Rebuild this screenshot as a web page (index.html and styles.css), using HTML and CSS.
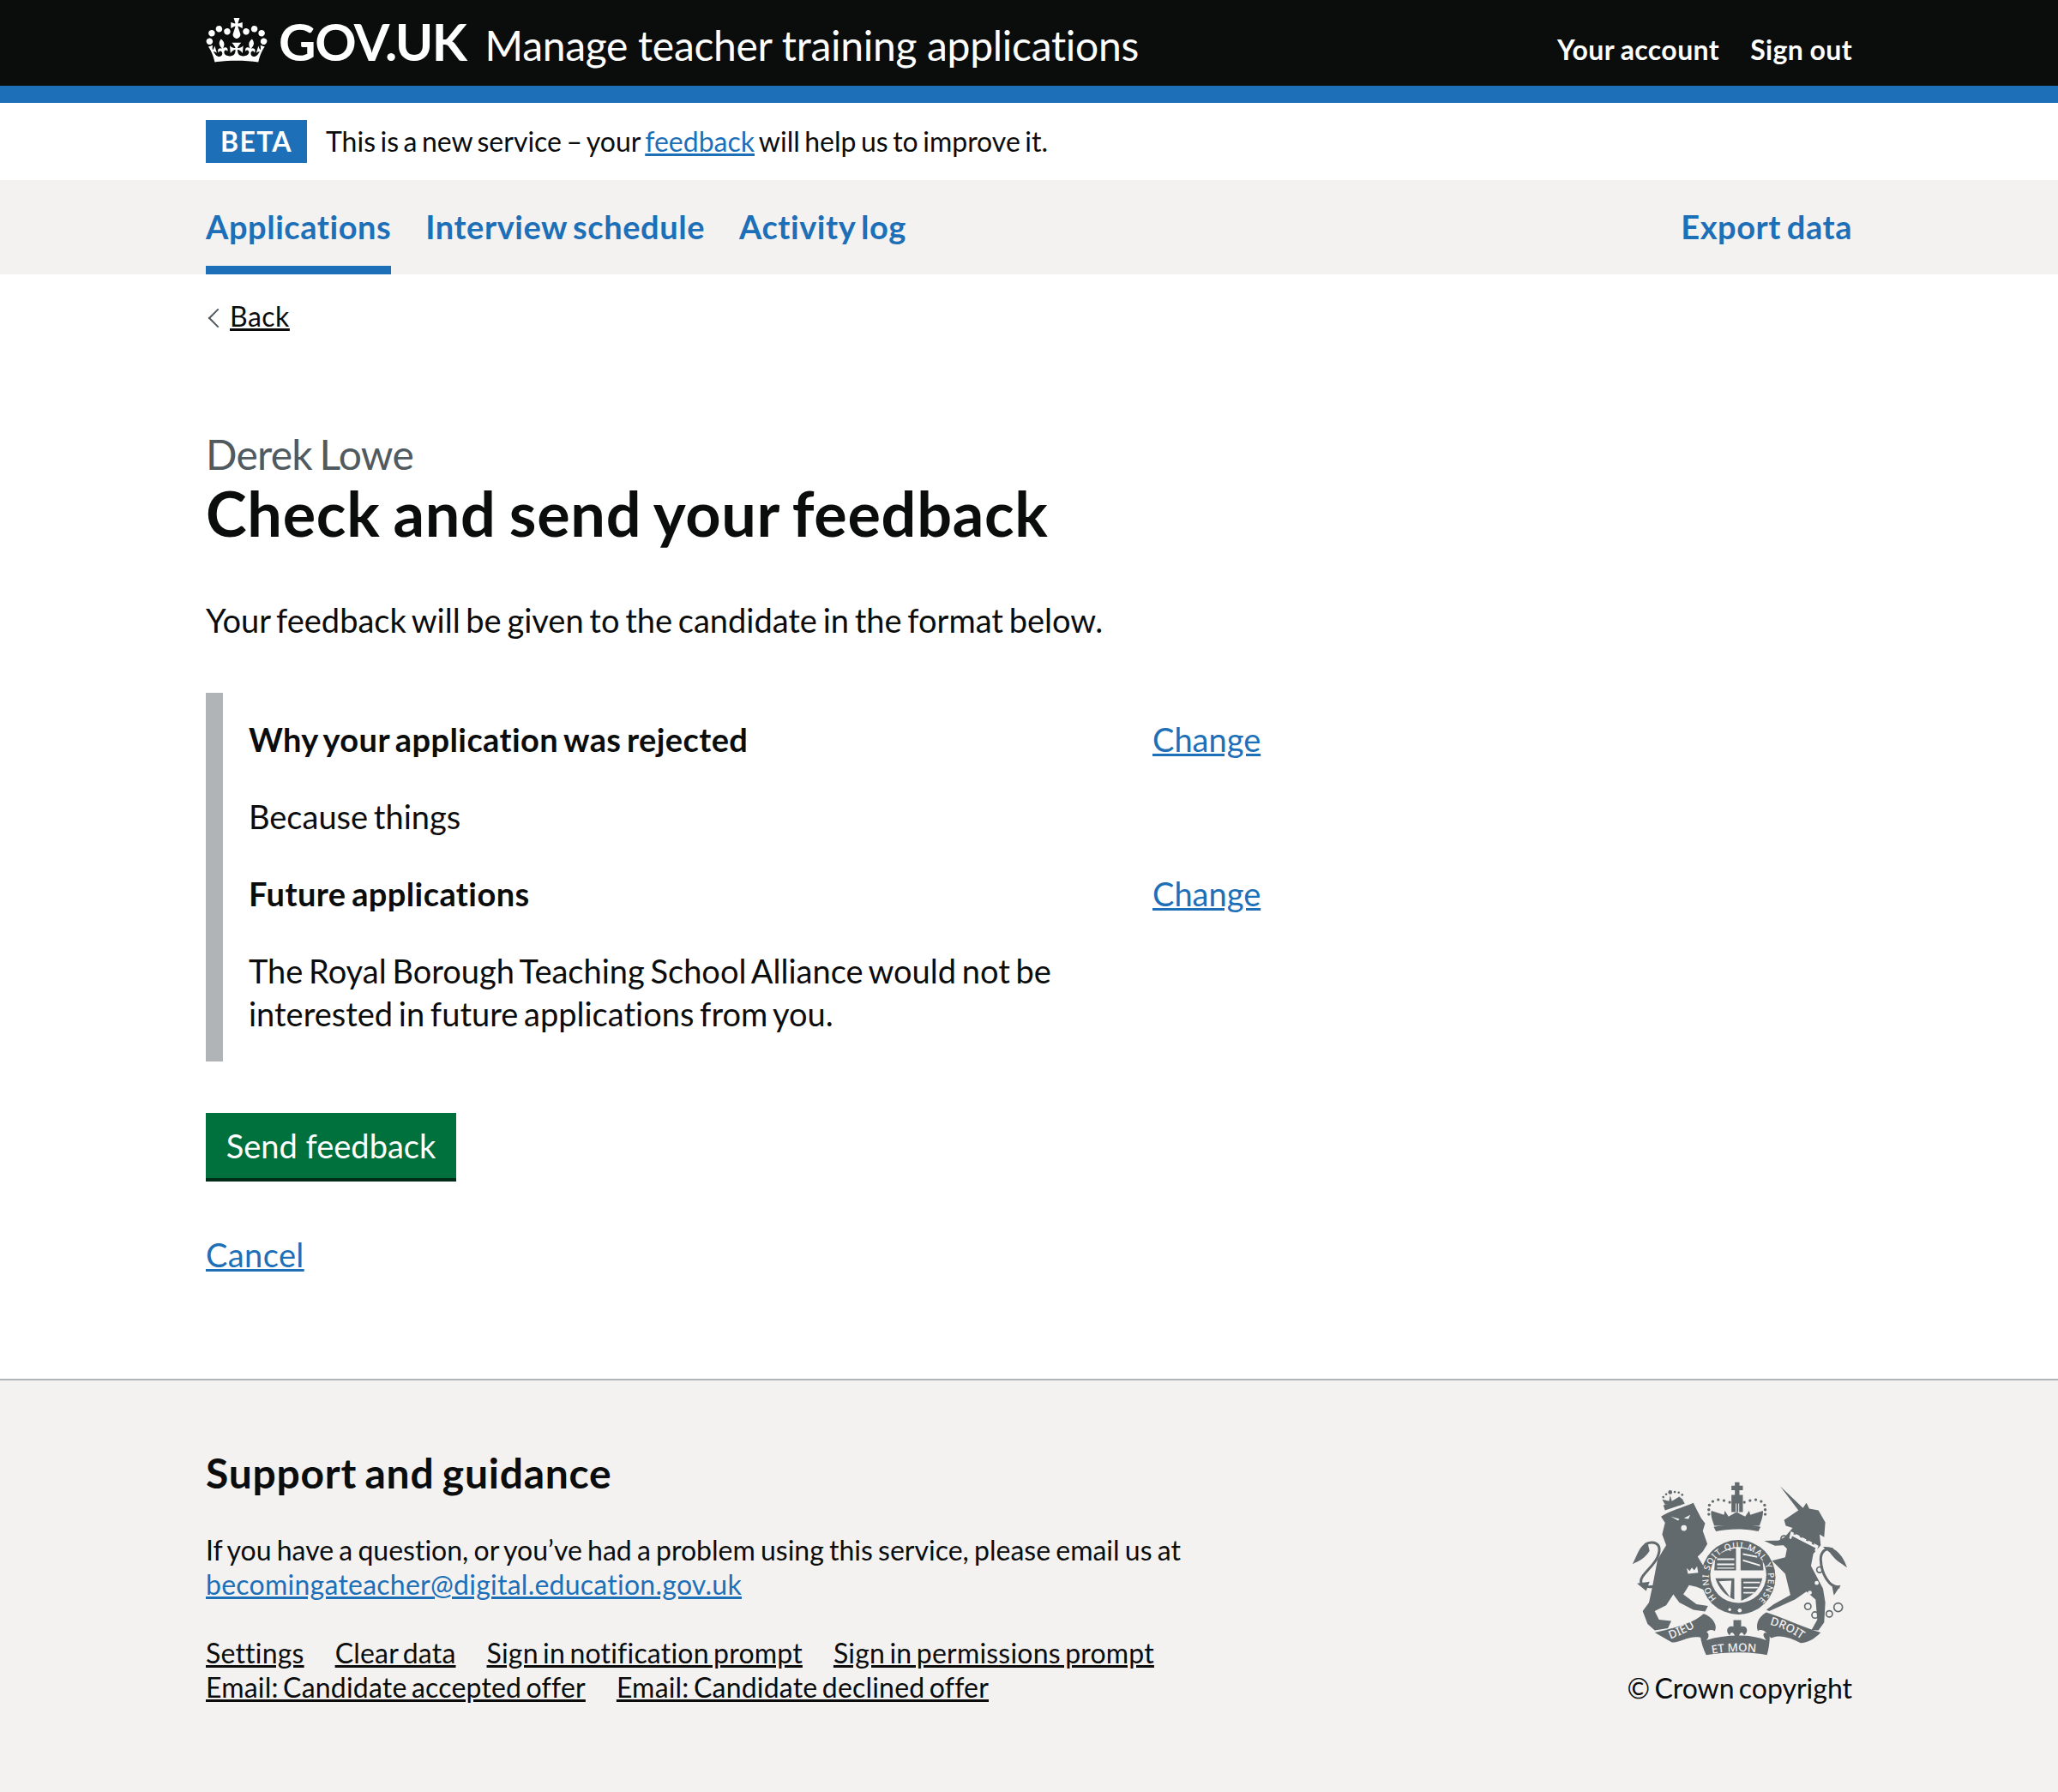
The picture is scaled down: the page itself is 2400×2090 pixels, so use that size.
FILE: index.html
```html
<!DOCTYPE html>
<html lang="en">
  <head>
    <meta charset="UTF-8" />
    <meta name="viewport" content="width=device-width, initial-scale=1.0" />
    <title>Check and send your feedback</title>
    <link rel="stylesheet" href="styles.css">
  </head>
  <body>
    <header class="site-header">
      <div class="wrap header-row">
        <div class="brand">
          <svg class="crown" viewBox="0 0 132 97" aria-hidden="true"><path fill="currentColor" d="M25 30.2c3.5 1.5 7.7-.2 9.1-3.7 1.5-3.6-.2-7.8-3.9-9.2-3.6-1.4-7.6.3-9.1 3.9-1.4 3.5.3 7.5 3.9 9zM9 39.5c3.6 1.5 7.8-.2 9.2-3.7 1.5-3.6-.2-7.8-3.9-9.1-3.6-1.5-7.6.2-9.1 3.8-1.4 3.5.3 7.5 3.8 9zM4.4 57.2c3.5 1.5 7.7-.2 9.1-3.8 1.5-3.6-.2-7.7-3.9-9.1-3.5-1.5-7.6.3-9.1 3.8-1.4 3.5.3 7.6 3.9 9.1zm38.3-21.4c3.5 1.5 7.7-.2 9.1-3.8 1.5-3.6-.2-7.7-3.9-9.1-3.6-1.5-7.6.3-9.1 3.8-1.3 3.6.4 7.7 3.9 9.1zm64.4-5.6c-3.6 1.5-7.8-.2-9.1-3.7-1.5-3.6.2-7.8 3.8-9.2 3.6-1.4 7.7.3 9.2 3.9 1.3 3.5-.4 7.5-3.9 9zm15.9 9.3c-3.6 1.5-7.7-.2-9.1-3.7-1.5-3.6.2-7.8 3.7-9.1 3.6-1.5 7.7.2 9.2 3.8 1.5 3.5-.3 7.5-3.8 9zm4.7 17.7c-3.6 1.5-7.8-.2-9.2-3.8-1.5-3.6.2-7.7 3.9-9.1 3.6-1.5 7.7.3 9.2 3.8 1.3 3.5-.4 7.6-3.9 9.1zM89.3 35.8c-3.6 1.5-7.8-.2-9.2-3.8-1.4-3.6.2-7.7 3.9-9.1 3.6-1.5 7.7.3 9.2 3.8 1.4 3.6-.3 7.7-3.9 9.1zM69.7 17.7l8.9 4.7V9.3l-8.9 2.8c-.2-.3-.5-.6-.9-.9L72.4 0H59.6l3.5 11.2c-.3.3-.6.5-.9.9l-8.8-2.8v13.1l8.8-4.7c.3.3.6.7.9.9l-5 15.4v.1c-.2.8-.4 1.6-.4 2.4 0 4.1 3.1 7.5 7 8.1h.2c.3 0 .7.1 1 .1.4 0 .7 0 1-.1h.2c4-.6 7.1-4.1 7.1-8.1 0-.8-.1-1.7-.4-2.4V34l-5.1-15.4c.4-.2.7-.6 1-.9zM66 92.8c16.9 0 32.8 1.1 47.1 3.2 4-16.9 8.9-26.7 14-33.5l-9.6-3.4c1 4.9 1.1 7.2 0 10.2-1.5-1.4-3-4.3-4.2-8.7L108.6 76c2.8-2 5-3.2 7.5-3.3-4.4 9.4-10 11.9-13.6 11.2-4.3-.8-6.3-4.6-5.6-7.9 1-4.7 5.7-5.9 8-.5 4.3-8.7-3-11.4-7.6-8.8 7.1-7.2 7.9-13.5 2.1-21.1-8 6.1-8.1 12.3-4.5 20.8-4.7-5.4-12.1-2.5-9.5 6.2 3.4-5.2 7.9-2 7.2 3.1-.6 4.3-6.4 7.8-13.5 7.2-10.3-.9-10.9-8-11.2-13.8 2.5-.5 7.1 1.8 11 7.3L80.2 60c-4.1 4.4-8 5.3-12.3 5.4 1.4-4.4 8-11.6 8-11.6H55.5s6.4 7.2 7.9 11.6c-4.2-.1-8-1-12.3-5.4l1.4 16.4c3.9-5.5 8.5-7.7 10.9-7.3-.3 5.8-.9 12.8-11.1 13.8-7.2.6-12.9-2.9-13.5-7.2-.7-5 3.8-8.3 7.1-3.1 2.7-8.7-4.6-11.6-9.4-6.2 3.7-8.5 3.6-14.7-4.5-20.8-5.8 7.6-5 13.9 2.2 21.1-4.7-2.6-11.9.1-7.7 8.8 2.3-5.5 7.1-4.2 8.1.5.7 3.3-1.3 7.1-5.7 7.9-3.5.7-9-1.8-13.5-11.2 2.5.1 4.7 1.3 7.5 3.3l-4.7-15.4c-1.2 4.4-2.7 7.2-4.3 8.7-1.1-3-.9-5.3 0-10.2l-9.5 3.4c5 6.9 9.9 16.7 14 33.5 14.8-2.1 30.8-3.2 47.7-3.2z"/></svg>
          <span class="logotype">GOV.UK</span>
          <span class="service-name">Manage teacher training applications</span>
        </div>
        <nav class="account-links">
          <a href="#">Your account</a>
          <a href="#">Sign out</a>
        </nav>
      </div>
    </header>

    <div class="wrap beta-bar">
      <strong class="beta-tag">BETA</strong>
      <span>This is a new service – your <a class="link" href="#">feedback</a> will help us to improve it.</span>
    </div>

    <nav class="main-nav">
      <div class="wrap main-nav-row">
        <a class="nav-item nav-current" href="#">Applications</a>
        <a class="nav-item" href="#">Interview schedule</a>
        <a class="nav-item" href="#">Activity log</a>
        <a class="nav-item nav-right" href="#">Export data</a>
      </div>
    </nav>

    <main class="wrap">
      <a class="back-link" href="#">Back</a>

      <span class="caption">Derek Lowe</span>
      <h1 class="page-title">Check and send your feedback</h1>

      <p class="lead">Your feedback will be given to the candidate in the format below.</p>

      <div class="inset">
        <h2 class="inset-head">Why your application was rejected</h2>
        <a class="link" href="#">Change</a>
        <p class="inset-text">Because things</p>
        <h2 class="inset-head">Future applications</h2>
        <a class="link" href="#">Change</a>
        <p class="inset-text">The Royal Borough Teaching School Alliance would not be interested in future applications from you.</p>
      </div>

      <button class="send-but">Send feedback</button>

      <p class="cancel"><a class="link" href="#">Cancel</a></p>
    </main>

    <footer class="site-footer">
      <div class="wrap footer-row">
        <div class="footer-main">
          <h2 class="footer-head">Support and guidance</h2>
          <p class="footer-text">If you have a question, or you’ve had a problem using this service, please email us at <a class="link footer-mail" href="#">becomingateacher@digital.education.gov.uk</a></p>
          <div class="footer-links">
            <a href="#">Settings</a>
            <a href="#">Clear data</a>
            <a href="#">Sign in notification prompt</a>
            <a href="#">Sign in permissions prompt</a>
            <a href="#">Email: Candidate accepted offer</a>
            <a href="#">Email: Candidate declined offer</a>
          </div>
        </div>
        <div class="footer-crest">
          <svg class="crest" viewBox="70 75 755 620" aria-hidden="true">
            <defs>
              <path id="ring" d="M366 486 A104 104 0 1 1 518 486"/>
              <path id="rib-left" d="M205 628 Q265 606 316 570"/>
              <path id="rib-mid" d="M346 680 Q435 664 530 678"/>
              <path id="rib-right" d="M552 578 Q612 592 672 636"/>
            </defs>
            <g fill="#626a6e">
              <!-- lion -->
              <path d="M172 200 C200 180 250 168 285 152 L298 178 L312 205 L326 224 L318 250 L334 296 L318 322 L300 340 L332 392 L340 430 L322 456 L296 446 L270 440 L250 472 L296 506 L336 512 L326 532 L285 526 L236 500 L215 472 L190 510 L150 530 L165 560 L208 565 L196 590 L150 598 L125 575 L108 530 L130 500 L143 440 L160 350 L190 300 L176 262 L186 222 Z"/>
              <path d="M125 290 C95 300 88 340 72 366 C96 356 116 346 132 320 Z"/>
              <path fill="none" stroke="#626a6e" stroke-width="9" d="M146 444 C115 450 92 436 106 412 C124 384 168 354 166 312 C164 290 136 284 116 298"/>
              <path d="M88 434 L132 428 L120 460 Z"/>
              <!-- lion crown -->
              <path d="M186 158 L176 140 L200 146 L204 126 L210 146 L236 130 L250 142 L240 160 Z"/>
              <circle cx="204" cy="115" r="7"/><circle cx="180" cy="132" r="4"/><circle cx="190" cy="122" r="4"/><circle cx="220" cy="114" r="4"/><circle cx="234" cy="116" r="4"/><circle cx="246" cy="124" r="4"/>
              <path d="M180 160 L250 145 L255 155 L186 178 Z"/>
              <!-- unicorn -->
              <path d="M588 94 L668 170 L680 152 L690 172 L722 178 L746 220 L742 272 L726 262 L730 300 L704 330 L696 372 L738 452 L746 500 L742 570 L722 598 L698 596 L718 560 L712 490 L680 462 L640 490 L582 516 L550 530 L540 526 L566 506 L624 474 L606 400 L560 354 L606 342 L612 312 L600 300 L570 302 L532 285 L582 284 L604 272 L632 240 L608 232 L602 212 L652 178 Z"/>
              <path d="M738 306 C780 300 810 340 822 378 C798 362 780 352 762 326 Z"/>
              <path fill="none" stroke="#626a6e" stroke-width="9" d="M796 446 C760 450 732 400 730 350 C730 320 750 308 772 314"/>
              <path d="M770 446 L800 440 L776 476 Z"/>
              <!-- central crown -->
              <path d="M430 80 H446 V92 H458 V108 H446 V124 H458 V184 H418 V124 H430 V108 H418 V92 H430 Z"/>
              <path fill="#f3f2f1" d="M433 154 H436 V186 H433 Z M442 154 H445 V186 H442 Z"/>
              <path d="M358 232 C350 210 344 192 348 180 L392 194 L395 180 L408 200 L436 184 L466 200 L480 180 L484 194 L528 180 C530 192 524 212 516 232 Z"/>
              <path d="M356 236 C400 226 476 226 520 236 L512 252 C470 242 406 242 364 252 Z"/>
              <circle cx="339" cy="176" r="5"/><circle cx="341" cy="160" r="5"/><circle cx="353" cy="147" r="5"/><circle cx="372" cy="141" r="5"/><circle cx="392" cy="144" r="5"/><circle cx="412" cy="150" r="5"/>
              <circle cx="536" cy="176" r="5"/><circle cx="534" cy="160" r="5"/><circle cx="522" cy="147" r="5"/><circle cx="503" cy="141" r="5"/><circle cx="483" cy="144" r="5"/><circle cx="463" cy="150" r="5"/>
              <circle cx="339" cy="192" r="5"/><circle cx="536" cy="192" r="5"/>
              <!-- garter -->
              <circle cx="442" cy="412" r="130"/>
              <circle cx="442" cy="404" r="98" fill="#f3f2f1"/>
              <path d="M358 388 L362 340 Q395 316 434 310 V388 Z"/>
              <path d="M450 388 V310 Q500 316 526 342 L530 388 Z"/>
              <path d="M362 416 H428 V490 Q380 470 362 416 Z"/>
              <path d="M452 416 H526 Q515 470 452 494 Z"/>
              <path d="M374 426 L414 482 L418 424 Z" fill="#f3f2f1"/>
              <path fill="#f3f2f1" d="M368 346 h60 v6 h-60 z M368 364 h60 v6 h-60 z M368 378 h60 v4 h-60 z M458 328 l50 10 v6 l-50 -10 z M458 350 l60 18 v6 l-60 -18 z M460 428 h58 v5 h-58 z M460 446 h52 v5 h-52 z M460 464 h38 v5 h-38 z"/>
              <circle cx="447" cy="528" r="7" fill="#f3f2f1"/>
              <circle cx="412" cy="525" r="5" fill="#f3f2f1"/>
              <!-- chain -->
              <g fill="none" stroke="#626a6e" stroke-width="5">
                <circle cx="685" cy="514" r="11"/><circle cx="710" cy="544" r="11"/><circle cx="760" cy="540" r="11"/><circle cx="791" cy="517" r="15"/><circle cx="726" cy="386" r="10"/><circle cx="602" cy="278" r="11"/>
              </g>
              <!-- unicorn collar -->
              <path fill="#f3f2f1" d="M626 252 L722 302 L716 322 L620 276 Z"/>
              <path d="M630 268 L712 310 L708 320 L626 282 Z M634 262 l5 -9 l5 11 z M656 272 l5 -10 l5 13 z M678 284 l5 -10 l5 13 z M698 296 l5 -10 l5 13 z"/>
              <circle cx="692" cy="466" r="7" fill="#f3f2f1"/><circle cx="716" cy="432" r="7" fill="#f3f2f1"/>
              <!-- lion face -->
              <circle cx="252" cy="240" r="10" fill="#f3f2f1"/>
              <path fill="#f3f2f1" d="M206 200 l30 8 l-4 6 z M252 206 l22 -12 l-6 14 z M262 380 l10 10 l8 -12 l8 10 l10 -14 l4 22 l-36 4 z"/>
              <!-- ribbons -->
              <path d="M150 605 C220 590 290 570 320 540 C350 548 372 580 360 600 C340 590 330 600 318 625 C280 610 240 640 210 640 Z"/>
              <path d="M510 600 C500 570 520 545 540 535 C590 550 660 585 730 605 C705 630 685 640 660 642 C625 625 590 610 556 625 C540 598 520 590 510 600 Z"/>
              <path d="M308 610 C340 590 345 620 330 632 C400 610 480 610 540 632 C525 618 525 595 552 612 C552 640 548 665 542 684 C480 672 400 672 330 684 C320 665 312 640 308 610 Z"/>
              <!-- fleur -->
              <path d="M425 562 H452 V585 C470 578 482 600 462 615 C456 600 450 605 446 612 L437 640 L428 612 C424 604 416 600 412 615 C394 600 406 578 425 585 Z"/>
            </g>
            <g class="crest-text">
              <text font-size="30" textLength="490"><textPath href="#ring">HONI SOIT QUI MAL Y PENSE</textPath></text>
              <text font-size="40"><textPath href="#rib-left">DIEU</textPath></text>
              <text font-size="40"><textPath href="#rib-mid" startOffset="4">ET MON</textPath></text>
              <text font-size="40"><textPath href="#rib-right">DROIT</textPath></text>
            </g>
          </svg>
          <span class="copyright">© Crown copyright</span>
        </div>
      </div>
    </footer>
  </body>
</html>
```

FILE: styles.css
```css
body {
  margin: 0;
  background-color: white;
  color: #0b0c0c;
  font-family: Lato, Arial, sans-serif;
  font-size: 38px;
  line-height: 50px;
  word-spacing: -3px;
  font-variant-ligatures: none;
}
.wrap {
  width: 1920px;
  margin: 0 auto;
}
.link {
  color: #1d70b8;
}

/* header */
.site-header {
  height: 100px;
  background-color: #0b0c0c;
  border-bottom: 20px solid #1d70b8;
  color: white;
}
.header-row {
  height: 100px;
  display: flex;
  justify-content: space-between;
}
.brand {
  display: flex;
  align-items: center;
}
.crown {
  width: 72px;
  height: 52px;
  margin: -6px 13px 0 0;
}
.logotype {
  font-size: 60px;
  font-weight: 700;
  margin: -4px 22px 0 0;
  letter-spacing: -1.4px;
}
.service-name {
  font-size: 48px;
  margin-top: 6px;
  word-spacing: 0;
  letter-spacing: -0.3px;
}
.account-links {
  display: flex;
  gap: 36px;
  align-items: center;
  padding-top: 16px;
}
.account-links a {
  color: white;
  text-decoration: none;
  font-size: 32px;
  font-weight: 700;
  letter-spacing: 0.4px;
  word-spacing: -1px;
}

/* beta */
.beta-bar {
  height: 50px;
  padding: 20px 0;
  display: flex;
  align-items: center;
  gap: 22px;
  font-size: 32px;
  line-height: 50px;
  word-spacing: -2.7px;
}
.beta-tag {
  display: block;
  width: 118px;
  height: 50px;
  background-color: #1d70b8;
  color: white;
  text-align: center;
  letter-spacing: 0.04em;
}

/* nav */
.main-nav {
  height: 110px;
  background-color: #f3f2f1;
}
.main-nav-row {
  display: flex;
  gap: 40px;
}
.nav-item {
  height: 100px;
  line-height: 108px;
  font-weight: 700;
  color: #1d70b8;
  text-decoration: none;
  letter-spacing: 0.55px;
}
.nav-current {
  border-bottom: 10px solid #1d70b8;
}
.nav-right {
  margin-left: auto;
}

/* content */
.back-link {
  display: block;
  margin-top: 30px;
  padding-left: 28px;
  font-size: 32px;
  line-height: 38px;
  color: #0b0c0c;
  position: relative;
  letter-spacing: 0.5px;
}
.back-link::before {
  content: "";
  position: absolute;
  left: 6px;
  top: 13px;
  width: 14px;
  height: 14px;
  border-left: 2px solid #505a5f;
  border-bottom: 2px solid #505a5f;
  transform: rotate(45deg);
}
.caption {
  display: block;
  margin-top: 112px;
  font-size: 48px;
  line-height: 60px;
  color: #505a5f;
  letter-spacing: -0.75px;
}
.page-title {
  margin: -2px 0 60px;
  font-size: 72px;
  line-height: 80px;
  font-weight: 700;
  letter-spacing: 0.7px;
}
.lead {
  margin: 0 0 60px;
}
.inset {
  width: 1180px;
  padding: 29px 0 31px 30px;
  border-left: 20px solid #b1b4b6;
  display: grid;
  grid-template-columns: 1054px auto;
  row-gap: 40px;
}
.inset-head {
  margin: 0;
  font-size: 38px;
  line-height: 50px;
  font-weight: 700;
  letter-spacing: 0.4px;
}
.inset-text {
  margin: 0;
  grid-column: 1 / 3;
  width: 1000px;
}
.send-but {
  display: block;
  margin: 60px 0 0;
  padding: 0;
  height: 76px;
  width: 292px;
  border: none;
  background-color: #00703c;
  box-shadow: 0 4px 0 #002d18;
  color: white;
  font: inherit;
  white-space: nowrap;
}
.cancel {
  margin: 64px 0 120px;
  letter-spacing: 0.4px;
}

/* footer */
.site-footer {
  height: 480px;
  border-top: 2px solid #b1b4b6;
  background-color: #f3f2f1;
  font-size: 32px;
  line-height: 40px;
  word-spacing: -2px;
}
.footer-row {
  display: flex;
  justify-content: space-between;
}
.footer-main {
  width: 1280px;
  padding-top: 78px;
}
.footer-head {
  margin: 0 0 40px;
  font-size: 48px;
  line-height: 60px;
  font-weight: 700;
  letter-spacing: 0.75px;
  word-spacing: -3px;
}
.footer-text {
  margin: 0 0 40px;
}
.footer-mail {
  display: block;
  letter-spacing: 0.25px;
}
.footer-links {
  display: flex;
  flex-wrap: wrap;
  column-gap: 36px;
  width: 1200px;
  word-spacing: -3px;
  letter-spacing: 0.2px;
}
.footer-links a {
  color: #0b0c0c;
}
.footer-crest {
  display: flex;
  flex-direction: column;
  align-items: flex-end;
  padding-top: 114px;
}
.crest {
  display: block;
  width: 252px;
  height: 207px;
  margin: 3px 5px 0 0;
}
.crest-text {
  fill: #f3f2f1;
  font-family: "Noto Sans", sans-serif;
  font-weight: 500;
  word-spacing: 0;
}
.copyright {
  margin-top: 15px;
  word-spacing: -3px;
}
```
